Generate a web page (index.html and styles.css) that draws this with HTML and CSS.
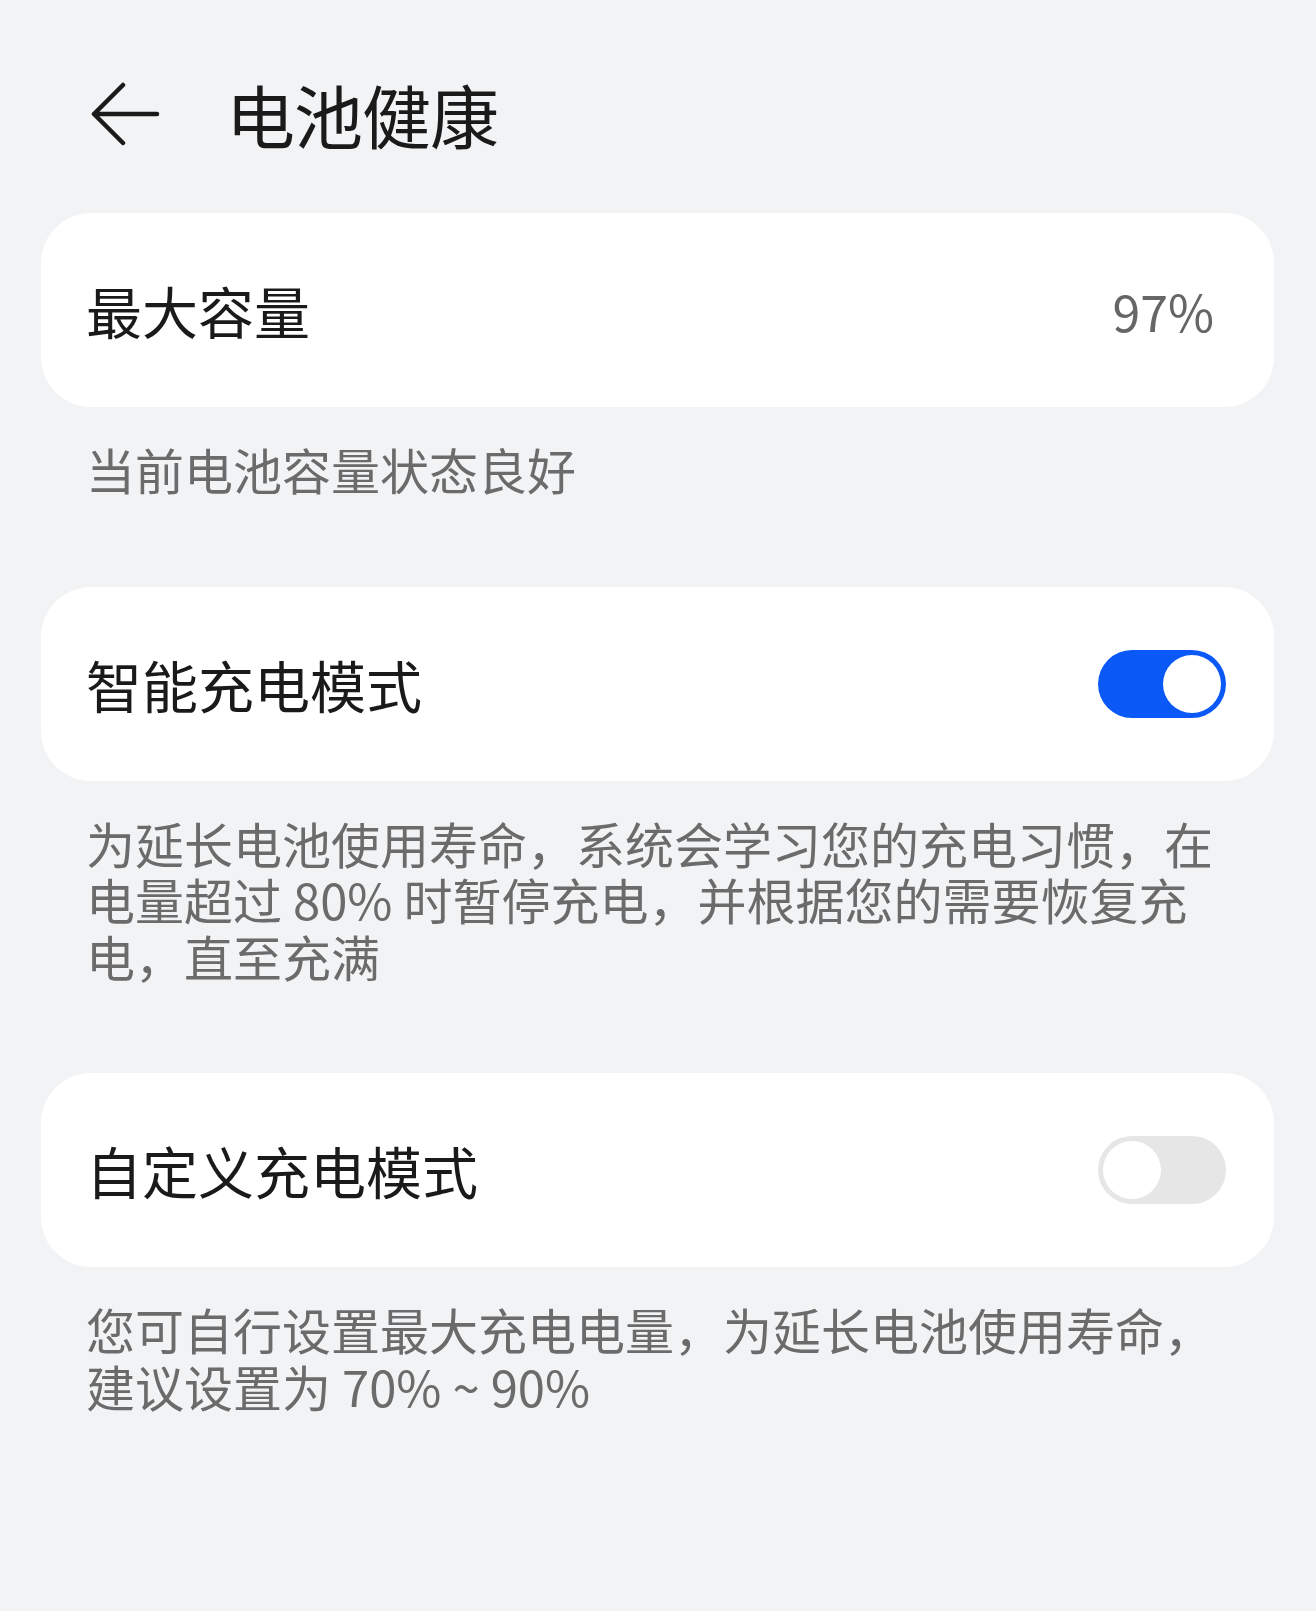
FILE: index.html
```html
<!DOCTYPE html>
<html>
<head>
    <title>电池健康</title>
    <meta charset="UTF-8">
    <meta name="viewport" content="width=device-width, initial-scale=1.0">
    <link rel="stylesheet" href="styles.css">
</head>
<body>
    <div class="page">
        <div class="header">
            <svg class="back" width="70" height="64" viewBox="0 0 70 64">
                <path d="M33 3 L4 32 L33 61 M4 32 H67" fill="none" stroke="#1a1a1a" stroke-width="4.5" stroke-linecap="round" stroke-linejoin="round"/>
            </svg>
            <h1 class="title">电池健康</h1>
        </div>

        <div class="section">
            <div class="card">
                <div class="label">最大容量</div>
                <div class="value">97%</div>
            </div>
            <div class="desc">当前电池容量状态良好</div>
        </div>

        <div class="section">
            <div class="card">
                <div class="label">智能充电模式</div>
                <div class="switch on"><span class="knob"></span></div>
            </div>
            <div class="desc">为延长电池使用寿命，系统会学习您的充电习惯，在电量超过 80% 时暂停充电，并根据您的需要恢复充电，直至充满</div>
        </div>

        <div class="section">
            <div class="card">
                <div class="label">自定义充电模式</div>
                <div class="switch"><span class="knob"></span></div>
            </div>
            <div class="desc">您可自行设置最大充电电量，为延长电池使用寿命，建议设置为 70% ~ 90%</div>
        </div>
    </div>
</body>
</html>
```

FILE: styles.css
```css
body {
    margin: 0;
    background-color: #f1f3f5;
    font-family: "Noto Sans CJK SC", sans-serif;
    color: #1a1a1a;
}
.page {
    padding: 0 42px 0 41px;
}
.header {
    display: flex;
    align-items: center;
    height: 96px;
    padding-top: 66px;
    margin-bottom: 51px;
    padding-left: 49px;
}
.back {
    display: block;
    margin-right: 66px;
}
.title {
    margin: 0;
    font-size: 69px;
    font-weight: 400;
    line-height: 1;
    letter-spacing: -1px;
}
.card {
    background-color: #fff;
    border-radius: 50px;
    height: 194px;
    display: flex;
    align-items: center;
    justify-content: space-between;
    padding: 0 48px 0 45px;
}
.label {
    font-size: 56px;
    font-weight: 400;
    line-height: 1.2;
}
.value {
    font-size: 50px;
    font-weight: 400;
    color: #666;
    line-height: 1;
    margin-right: 12px;
}
.desc {
    padding: 34px 48px 89px 45px;
    font-size: 49px;
    line-height: 56.5px;
    color: #6b6b6b;
}
.switch {
    width: 118px;
    height: 58px;
    padding: 5px;
    border-radius: 34px;
    background-color: #e6e6e6;
    display: flex;
    justify-content: flex-start;
}
.switch.on {
    background-color: #0a59f7;
    justify-content: flex-end;
}
.knob {
    width: 58px;
    height: 58px;
    border-radius: 50%;
    background-color: #fff;
}
```
